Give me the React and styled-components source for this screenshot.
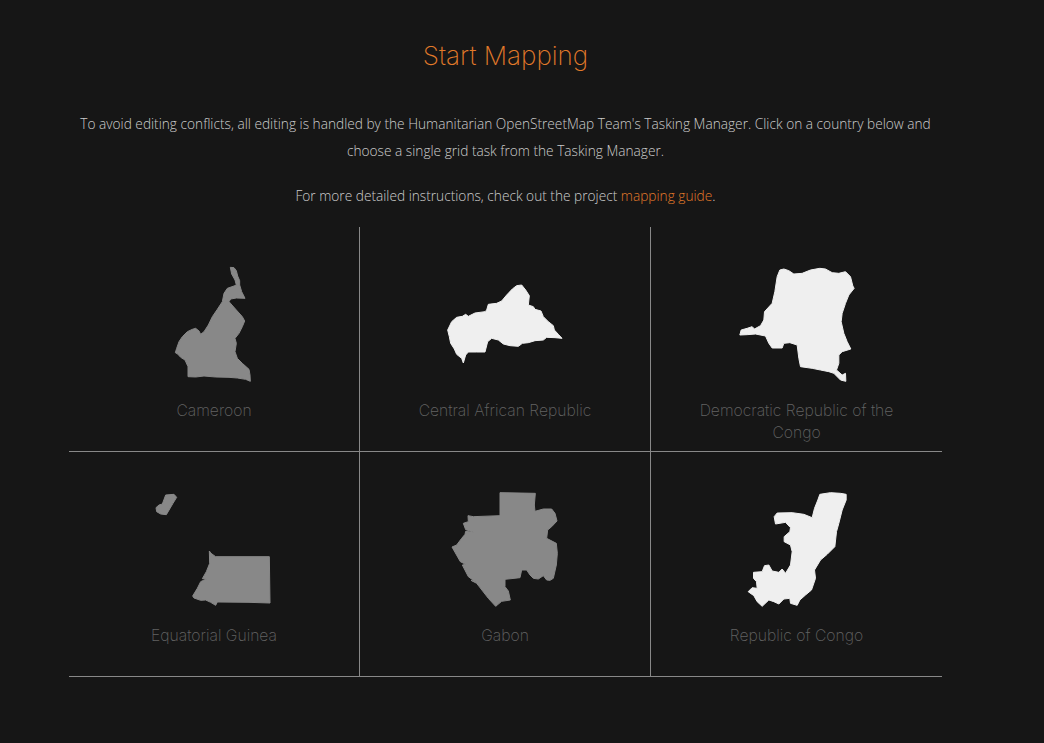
import styled, { createGlobalStyle } from "styled-components";

const GlobalStyle = createGlobalStyle`
    html, body {
        margin: 0;
        padding: 0;
        background-color: #161616;
    }
`

const Page = styled.div`
    box-sizing: border-box;
    width: 873px;
    min-height: 743px;
    margin-left: 69px;
    padding-top: 37px;
`

const Title = styled.h2`
    margin: 0 0 35px 0;
    font-family: 'Inter', sans-serif;
    font-weight: 200;
    font-size: 26px;
    line-height: 38px;
    text-align: center;
    color: #e27a2a;
`

const Intro = styled.p`
    margin: 0 0 18px 0;
    padding: 0 8px;
    font-family: 'Open Sans', sans-serif;
    font-weight: 300;
    font-size: 13.7px;
    line-height: 27px;
    text-align: center;
    color: #cccccc;
`

const GuideLink = styled.a`
    color: #e27a2a;
    text-decoration: none;
`

const Grid = styled.div`
    display: grid;
    grid-template-columns: repeat(3, 291px);
    grid-auto-rows: 225px;
    margin-top: 18px;
`

const Cell = styled.div`
    box-sizing: border-box;
    padding: 23px 40px 0;
    display: flex;
    flex-direction: column;
    align-items: center;
    border-bottom: 1px solid #888888;
    border-right: ${(props) => (props.$last ? "none" : "1px solid #888888")};
`

const Shape = styled.svg`
    display: block;
    flex: none;
    width: 130px;
    height: 140px;
    fill: ${(props) => (props.$muted ? "#888888" : "#efefef")};
    stroke: ${(props) => (props.$muted ? "#888888" : "#efefef")};
    stroke-width: 3;
    stroke-linejoin: round;
`

const Label = styled.div`
    margin-top: 10px;
    font-family: 'Inter', sans-serif;
    font-weight: 200;
    font-size: 15.7px;
    line-height: 22px;
    text-align: center;
    color: #636363;
`

const countries = [
    {
        name: "Cameroon",
        muted: true,
        box: "0 0 390 420",
        paths: ["M244,52 L255,53 L262,62 L266,78 L272,92 L272,105 L278,125 L288,145 L262,144 L245,147 L240,155 L262,180 L280,200 L287,213 L280,230 L270,250 L258,265 L262,280 L258,305 L265,325 L280,340 L300,358 L303,375 L304,394 L290,388 L265,384 L240,382 L200,381 L165,378 L140,381 L117,380 L117,350 L108,330 L95,322 L86,312 L79,308 L83,295 L90,275 L100,260 L115,245 L130,238 L140,235 L150,243 L155,253 L165,245 L178,225 L190,200 L205,178 L220,155 L225,130 L235,115 L255,108 L262,105 L258,90 L248,72 Z"],
    },
    {
        name: "Central African Republic",
        box: "15 -75 390 420",
        paths: ["M38,165 L50,140 L65,127 L82,124 L92,118 L100,124 L120,114 L150,110 L155,105 L160,88 L185,85 L200,78 L215,60 L232,42 L245,32 L260,30 L272,45 L283,62 L280,90 L295,95 L300,103 L318,108 L325,125 L340,140 L355,152 L358,165 L370,178 L381,190 L360,188 L335,187 L325,195 L300,197 L280,203 L262,205 L250,214 L225,212 L205,207 L190,195 L170,190 L158,200 L150,231 L125,231 L100,231 L92,240 L85,264 L80,250 L65,238 L58,222 L47,205 L43,185 Z"],
    },
    {
        name: "Democratic Republic of the Congo",
        box: "4.5 -30 390 420",
        paths: ["M28,225 L32,210 L50,205 L65,200 L72,207 L90,197 L100,180 L102,155 L125,130 L133,95 L140,50 L148,30 L160,27 L175,32 L190,42 L215,40 L240,30 L268,25 L285,27 L305,38 L325,40 L345,35 L360,50 L367,78 L371,85 L355,105 L345,130 L335,160 L332,185 L340,220 L350,245 L361,267 L335,275 L325,285 L325,310 L318,330 L335,345 L345,340 L346,364 L330,360 L310,340 L295,335 L270,330 L245,325 L210,320 L205,295 L200,255 L178,248 L160,250 L155,264 L125,264 L115,250 L105,228 L75,222 L50,224 Z"],
    },
    {
        name: "Equatorial Guinea",
        muted: true,
        box: "0 -30 390 420",
        paths: [
            "M50,30 L75,28 L83,37 L72,55 L62,72 L52,89 L35,87 L23,80 L21,68 L30,60 L40,57 Z",
            "M181,198 L186,205 L200,215 L361,215 L363,354 L300,352 L205,351 L200,361 L185,352 L170,345 L155,346 L135,339 L131,333 L145,310 L155,290 L172,282 L160,281 L172,260 L182,235 Z",
        ],
    },
    {
        name: "Gabon",
        muted: true,
        box: "-15 -30 390 420",
        paths: ["M165,23 L271,25 L268,60 L270,79 L295,72 L320,72 L330,85 L336,108 L320,125 L308,135 L305,160 L334,175 L337,205 L334,240 L325,280 L315,286 L305,285 L295,272 L280,282 L265,280 L255,270 L245,255 L230,255 L225,278 L180,283 L180,305 L190,318 L196,345 L170,349 L152,364 L130,340 L95,295 L78,286 L92,291 L70,275 L52,240 L62,238 L46,230 L21,186 L35,180 L50,160 L60,148 L62,139 L88,142 L62,134 L55,115 L70,110 L69,92 L85,95 L165,92 Z"],
    },
    {
        name: "Republic of Congo",
        box: "-25.5 -30 390 420",
        paths: ["M238,28 L270,23 L300,25 L317,28 L317,45 L305,75 L295,115 L288,140 L283,185 L260,208 L240,225 L222,255 L225,280 L213,315 L195,330 L178,345 L170,361 L150,355 L148,340 L130,342 L115,357 L100,350 L85,345 L65,364 L50,350 L40,332 L23,320 L35,308 L50,310 L48,290 L39,280 L39,262 L65,260 L72,242 L85,240 L95,258 L115,262 L125,252 L135,265 L150,240 L155,200 L150,180 L131,170 L131,155 L148,140 L150,128 L135,112 L105,117 L101,95 L110,84 L155,83 L190,88 L215,98 L222,70 L232,45 Z"],
    },
]

const App = () => {
    return (
        <Page>
            <GlobalStyle />
            <Title>Start Mapping</Title>
            <Intro>
                To avoid editing conflicts, all editing is handled by the Humanitarian OpenStreetMap Team's Tasking Manager. Click on a country below and choose a single grid task from the Tasking Manager.
            </Intro>
            <Intro>
                For more detailed instructions, check out the project <GuideLink href="#">mapping guide</GuideLink>.
            </Intro>
            <Grid>
                {countries.map((country, i) => (
                    <Cell key={country.name} $last={i % 3 === 2}>
                        <Shape viewBox={country.box} $muted={country.muted}>
                            {country.paths.map((d) => <path key={d} d={d} />)}
                        </Shape>
                        <Label>{country.name}</Label>
                    </Cell>
                ))}
            </Grid>
        </Page>
    )
}

export default App
